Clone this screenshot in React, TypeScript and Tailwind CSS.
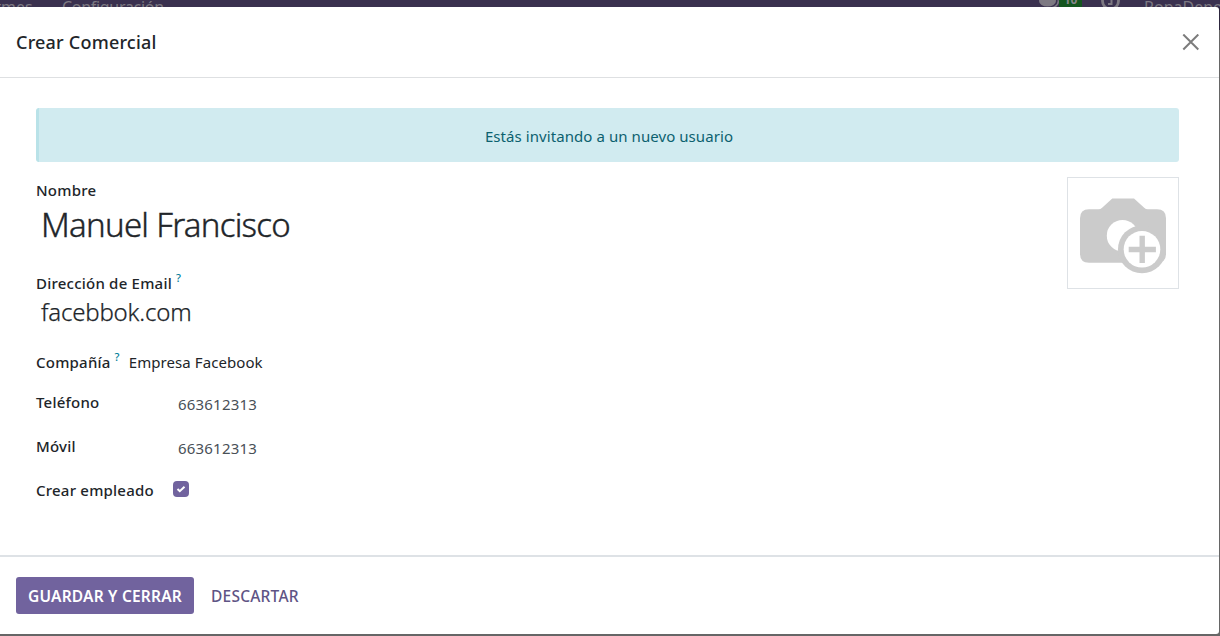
import type { ReactNode } from 'react';

function TopBar() {
  return (
    <div className="relative h-[7px] w-full overflow-hidden bg-[#3a314f] text-[16px] leading-[20px] text-[#7d7982]">
      <span className="absolute -left-[36px] -top-[3px] whitespace-nowrap">Informes</span>
      <span className="absolute left-[62px] -top-[3px] whitespace-nowrap tracking-[-0.3px]">Configuración</span>
      <svg className="absolute left-[1039px] top-0" width="20" height="10" viewBox="0 0 20 10">
        <ellipse cx="12.5" cy="2" rx="7.5" ry="6" fill="#7d7982" />
        <ellipse cx="9" cy="1" rx="9.6" ry="6.6" fill="#3a314f" />
        <ellipse cx="8.5" cy="1" rx="8.5" ry="5.5" fill="#7d7982" />
      </svg>
      <span className="absolute left-[1059px] -top-[9px] h-[16px] w-[23px] bg-[#14551f] text-center text-[12px] font-bold leading-[18px] text-[#85858a]">10</span>
      <svg className="absolute left-[1100px] -top-[9px]" width="22" height="20" viewBox="0 0 22 20">
        <circle cx="10.5" cy="10" r="8" fill="none" stroke="#7d7982" strokeWidth="2.8" />
        <path d="M11.5 5v8H8" fill="none" stroke="#7d7982" strokeWidth="2" />
      </svg>
      <span className="absolute left-[1144px] -top-[3px] whitespace-nowrap">RopaDeportiva</span>
    </div>
  );
}

function Label({ children, help }: { children: ReactNode; help?: boolean }) {
  return (
    <div className="flex whitespace-nowrap text-[15px] font-medium leading-[20px] tracking-[0.22px] text-[#212529]">
      <span>{children}</span>
      {help && <sup className="top-0 -mt-[5px] ml-[4px] text-[11px] font-medium leading-[20px] text-[#017e9a]">?</sup>}
    </div>
  );
}

function CameraPlaceholder() {
  return (
    <div className="h-[112px] w-[112px] shrink-0 border border-[#dee2e6]">
      <svg className="-ml-px -mt-px" width="112" height="112" viewBox="0 0 112 112">
        <path
          d="M22 32.3h9.5q2 0 3.6-1.6L45.3 21.5H67l10.2 9.2q1.6 1.6 3.6 1.6H90q9 0 9 9v35.4q0 9-9 9H22q-9 0-9-9V41.3q0-9 9-9z"
          fill="#cbcbcb"
        />
        <circle cx="55.5" cy="58.7" r="15.7" fill="#fff" />
        <circle cx="75" cy="72.3" r="24" fill="#cbcbcb" />
        <circle cx="75" cy="72.3" r="18.3" fill="#fff" />
        <path d="M61.7 72.5h27.2M75.2 58.8V86" stroke="#cbcbcb" strokeWidth="5.4" />
      </svg>
    </div>
  );
}

export default function App() {
  return (
    <div className="h-[636px] w-[1220px] overflow-hidden bg-[linear-gradient(#2c253c_30px,#666_30px)] font-['Noto_Sans',sans-serif]">
      <TopBar />
      <div className="flex h-[627px] w-[1219px] flex-col rounded-r-[3px] bg-white text-[#212529]">
        <header className="flex h-[71px] shrink-0 items-center justify-between border-b border-[#dee0e2] pl-4 pr-5">
          <h4 className="whitespace-nowrap text-[18px] font-medium tracking-[0.2px]">Crear Comercial</h4>
          <svg width="17" height="17" viewBox="0 0 17 17">
            <path d="M1.3 .5l15 15M16.3 .5l-15 15" stroke="#7c7c7c" strokeWidth="2" />
          </svg>
        </header>
        <main className="flex h-[477px] shrink-0 flex-col pl-9 pr-10 pt-[30px]">
          <div className="flex h-[54px] items-center justify-center rounded-[3px] border-l-[3px] border-[#b9e2e8] bg-[#d1ebf0] pt-[3px] text-[15px] text-[#0c616f]">
            <span className="whitespace-nowrap tracking-[0.07px]">Estás invitando a un nuevo usuario</span>
          </div>
          <div className="flex justify-between pt-[15px]">
            <div className="flex flex-col pt-[3px]">
              <Label>Nombre</Label>
              <div className="h-[50px] whitespace-nowrap pl-[5px] pt-[5px] text-[33px] font-light leading-[40px] tracking-[-0.73px] [-webkit-text-stroke:0.4px_#212529]">Manuel Francisco</div>
              <div className="h-[23px]" />
              <Label help>Dirección de Email</Label>
              <div className="whitespace-nowrap pl-[5px] text-[24px] font-light leading-[38px] tracking-[-0.18px] [-webkit-text-stroke:0.25px_#212529]">facebbok.com</div>
              <div className="flex gap-[9px] pt-[21px] text-[15px] leading-[20px]">
                <Label help>Compañía</Label>
                <span className="whitespace-nowrap tracking-[0.08px]">Empresa Facebook</span>
              </div>
              <div className="mt-[20px] flex">
                <div className="w-[142px]"><Label>Teléfono</Label></div>
                <span className="pt-[2px] text-[15px] leading-[20px] tracking-[0.2px] text-[#495057]">663612313</span>
              </div>
              <div className="mt-[22px] flex">
                <div className="w-[142px]"><Label>Móvil</Label></div>
                <span className="pt-[2px] text-[15px] leading-[20px] tracking-[0.2px] text-[#495057]">663612313</span>
              </div>
              <div className="mt-[22px] flex">
                <div className="w-[137px]"><Label>Crear empleado</Label></div>
                <span className="mt-px flex h-4 w-4 items-center justify-center rounded-[4px] bg-[#71639e]">
                  <svg width="10" height="8" viewBox="0 0 10 8"><path d="M1.5 4l2.3 2.2L8.5 1.8" fill="none" stroke="#fff" strokeWidth="2" /></svg>
                </span>
              </div>
            </div>
            <CameraPlaceholder />
          </div>
        </main>
        <footer className="flex h-[79px] items-center gap-[17px] border-t-2 border-[#dee2e6] pl-4 text-[15.5px] font-medium">
          <button className="h-[37px] w-[178px] whitespace-nowrap rounded-[3px] bg-[#71639e] pt-[2px] font-semibold tracking-[0.2px] text-white">GUARDAR Y CERRAR</button>
          <button className="whitespace-nowrap pt-[2px] tracking-[0.22px] text-[#5f5485]">DESCARTAR</button>
        </footer>
      </div>
    </div>
  );
}
